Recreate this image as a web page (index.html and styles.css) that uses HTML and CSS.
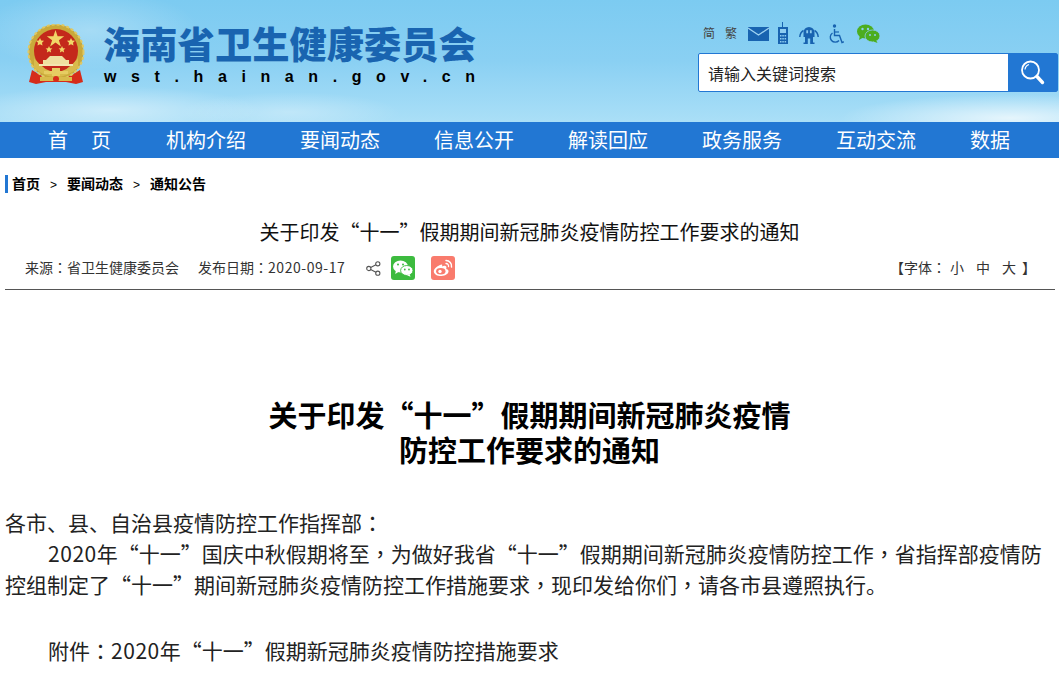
FILE: index.html
```html
<!DOCTYPE html>
<html lang="zh-CN">
<head>
<meta charset="utf-8">
<title>关于印发“十一”假期期间新冠肺炎疫情防控工作要求的通知</title>
<link rel="stylesheet" href="styles.css">
</head>
<body>
<header class="masthead">
  <div class="brand">
    <svg class="emblem" width="60" height="62" viewBox="0 0 60 62">
      <path d="M6 46 L3 58 L10 60 L20 58 L40 58 L50 60 L57 58 L54 46 L44 52 L16 52Z" fill="#d62c1a"/>
      <circle cx="30" cy="28" r="27.5" fill="#c9a93a"/>
      <circle cx="30" cy="28" r="27.5" fill="none" stroke="#e0c863" stroke-width="2" stroke-dasharray="3 2"/>
      <circle cx="30" cy="27" r="22" fill="#c4281b"/>
      <path d="M8 34 Q30 62 52 34 L52 44 Q30 62 8 44Z" fill="#d8bb4c"/>
      <path d="M29.500 6 L31.600 12.300 L38.200 12.300 L32.900 16.200 L34.900 22.500 L29.500 18.600 L24.100 22.500 L26.100 16.200 L20.800 12.300 L27.400 12.300Z" fill="#f1d768"/>
      <path d="M14 14l1.200 2.500 2.800.3-2 1.900.5 2.800-2.500-1.300-2.500 1.300.5-2.800-2-1.900 2.800-.3z" fill="#f1d768"/>
      <path d="M45 14l1.200 2.500 2.800.3-2 1.900.5 2.800-2.500-1.300-2.500 1.300.5-2.800-2-1.900 2.800-.3z" fill="#f1d768"/>
      <path d="M23 22l1 2.200 2.400.3-1.800 1.600.5 2.400-2.100-1.200-2.100 1.200.5-2.400-1.800-1.600 2.400-.3z" fill="#f1d768"/>
      <path d="M36 22l1 2.200 2.400.3-1.800 1.600.5 2.400-2.100-1.200-2.100 1.200.5-2.400-1.800-1.600 2.400-.3z" fill="#f1d768"/>
      <path d="M20 36 L24 32 L36 32 L40 36 L43 36 L43 40 L17 40 L17 36Z" fill="#efe0a0"/>
      <path d="M13 40h34v2H13z" fill="#f3e6b0"/>
      <path d="M18 47h24v3H18z M26 44h8v8h-8z" fill="#e6cd62"/>
      <path d="M14 53h32v4H14z" fill="#d8bb4c"/>
      <circle cx="30" cy="55" r="3" fill="#d62c1a"/>
    </svg>
    <div class="brand-text">
      <div class="brand-name">海南省卫生健康委员会</div>
      <div class="brand-url">wst.hainan.gov.cn</div>
    </div>
  </div>
  <div class="tools">
    <div class="tool-row">
      <span class="lang">简</span>
      <span class="lang lang-second">繁</span>
      <svg class="tool tool-mail" width="21" height="14" viewBox="0 0 21 14"><path d="M0 0h21v14H0z" fill="#1863b0"/><path d="M0 1l10.500 7L21 1" fill="none" stroke="#9fd3f2" stroke-width="1.300"/></svg>
      <svg class="tool tool-phone" width="10" height="22" viewBox="0 0 10 22"><path d="M4 0h1v6H4z" fill="#1863b0"/><path d="M0 5h10v17H0z" fill="#1863b0"/><path d="M2 7h6v4H2z" fill="#8fcdf0"/><path d="M2 13h1.500v1.500H2zM4.300 13h1.500v1.500H4.300zM6.600 13h1.500v1.500H6.600zM2 16h1.500v1.500H2zM4.300 16h1.500v1.500H4.300zM6.600 16h1.500v1.500H6.600zM2 19h1.500v1.500H2zM4.300 19h1.500v1.500H4.300zM6.600 19h1.500v1.500H6.600z" fill="#8fcdf0"/></svg>
      <svg class="tool tool-robot" width="20" height="18" viewBox="0 0 20 18"><path d="M4.500 6.500a5.500 5.500 0 0 1 11 0V11H14V18H11.200V12.500H8.800V18H6V11H4.500Z" fill="#1863b0"/><path d="M7.300 4.200h1.800v3H7.300zM10.900 4.200h1.800v3H10.900z" fill="#8fcdf0"/><path d="M4.500 4.500C1.500 6 1 8.500 .8 11M15.500 4.500C18.500 6 19 8.500 19.200 11" stroke="#1863b0" stroke-width="1.500" fill="none"/><path d="M4.500 17.300H8M12 17.300h3.500" stroke="#1863b0" stroke-width="1.400"/></svg>
      <svg class="tool tool-access" width="15" height="20" viewBox="0 0 15 20"><circle cx="5.500" cy="2" r="1.700" fill="#1863b0"/><path d="M5.500 5V11.500H10.500L13 18.500L15 17.800" fill="none" stroke="#1863b0" stroke-width="1.400"/><path d="M5.500 8H10" stroke="#1863b0" stroke-width="1.200"/><path d="M3.500 9A5 5 0 1 0 10 16.500" fill="none" stroke="#1863b0" stroke-width="1.400"/></svg>
      <svg class="tool tool-wechat" width="23" height="19" viewBox="0 0 23 19"><ellipse cx="8.500" cy="7.500" rx="8.500" ry="7" fill="#4cad1f"/><path d="M3 11l-1 5 5-3z" fill="#4cad1f"/><ellipse cx="15.500" cy="12" rx="7.500" ry="6" fill="#4cad1f" stroke="#8ccdf0" stroke-width=".8"/><path d="M19 16l1.500 3-4-1.500z" fill="#4cad1f"/><circle cx="5.500" cy="5" r="1.200" fill="#8fcdf0"/><circle cx="11" cy="5" r="1.200" fill="#8fcdf0"/><circle cx="13" cy="11" r="1" fill="#8fcdf0"/><circle cx="18" cy="11" r="1" fill="#8fcdf0"/></svg>
    </div>
    <form class="search">
      <div class="search-input">请输入关键词搜索</div>
      <div class="search-btn">
        <svg width="26" height="26" viewBox="0 0 26 26"><circle cx="10.500" cy="10" r="8.500" fill="none" stroke="#fff" stroke-width="1.800"/><path d="M5 9.500a6 6 0 0 1 4-5" fill="none" stroke="#fff" stroke-width="1.200"/><path d="M17 16.500l5.500 6" stroke="#fff" stroke-width="3.400" stroke-linecap="round"/></svg>
      </div>
    </form>
  </div>
</header>
<nav class="nav">
  <a class="nav-item nav-home">首&nbsp;&nbsp;&nbsp;&nbsp;页</a>
  <a class="nav-item">机构介绍</a>
  <a class="nav-item">要闻动态</a>
  <a class="nav-item">信息公开</a>
  <a class="nav-item">解读回应</a>
  <a class="nav-item">政务服务</a>
  <a class="nav-item">互动交流</a>
  <a class="nav-item">数据</a>
</nav>
<div class="crumb">
  <a>首页</a><span class="sep">&gt;</span><a>要闻动态</a><span class="sep">&gt;</span><a>通知公告</a>
</div>
<h2 class="doc-title">关于印发“十一”假期期间新冠肺炎疫情防控工作要求的通知</h2>
<div class="meta">
  <div class="meta-left">
    <span class="source">来源<span class="mid" lang="zh-TW">：</span>省卫生健康委员会</span>
    <span class="date">发布日期<span class="mid" lang="zh-TW">：</span><span class="num">2020-09-17</span></span>
    <svg class="share" width="15" height="15" viewBox="0 0 15 15"><circle cx="11.800" cy="2.800" r="2.100" fill="none" stroke="#555" stroke-width="1.100"/><circle cx="11.800" cy="12.200" r="2.100" fill="none" stroke="#555" stroke-width="1.100"/><circle cx="2.800" cy="7.500" r="2.100" fill="none" stroke="#555" stroke-width="1.100"/><path d="M4.700 6.500L9.900 3.800M4.700 8.500L9.900 11.200" stroke="#555" stroke-width="1.100"/></svg>
    <span class="badge badge-wechat">
      <svg width="20" height="17" viewBox="0 0 20 17"><ellipse cx="7.500" cy="6.500" rx="7.500" ry="6" fill="#fff"/><path d="M3 10l-.8 4 4-2.500z" fill="#fff"/><ellipse cx="13.800" cy="10.500" rx="6.200" ry="5" fill="#fff" stroke="#3dbb3f" stroke-width=".9"/><path d="M16.500 14l1 2.800-3.500-1.600z" fill="#fff"/><circle cx="5" cy="4.500" r="1" fill="#3dbb3f"/><circle cx="10" cy="4.500" r="1" fill="#3dbb3f"/><circle cx="11.800" cy="9.500" r=".9" fill="#3dbb3f"/><circle cx="16" cy="9.500" r=".9" fill="#3dbb3f"/></svg>
    </span>
    <span class="badge badge-weibo">
      <svg width="20" height="18" viewBox="0 0 20 18"><path d="M8.500 5.500C4.500 6.500 0.500 10 0.800 12.800C1.200 15.800 5 17.200 8.500 17C12.500 16.800 15.800 14.500 15.500 12C15.300 10.500 13.800 10.300 13.200 10C13.800 8.500 13.500 7 12 6.800C11 6.600 9.800 7 9 7.500C9.300 6.200 9.500 5.300 8.500 5.500Z" fill="#fff"/><ellipse cx="7.800" cy="12.300" rx="4.700" ry="3.300" fill="#f97b6d"/><circle cx="7" cy="12.500" r="1.700" fill="#fff"/><path d="M13 1.500A5.500 5.500 0 0 1 18.500 8" fill="none" stroke="#fff" stroke-width="1.500" stroke-linecap="round"/><path d="M13 4.500A2.500 2.500 0 0 1 15.500 7.500" fill="none" stroke="#fff" stroke-width="1.300" stroke-linecap="round"/></svg>
    </span>
  </div>
  <div class="font-size">【字体<span class="mid" lang="zh-TW">：</span><span class="fs fs-first">小</span><span class="fs">中</span><span class="fs">大</span>】</div>
</div>
<article class="article">
  <h1 class="headline">关于印发“十一”假期期间新冠肺炎疫情<br>防控工作要求的通知</h1>
  <p class="para para-first">各市、县、自治县疫情防控工作指挥部<span class="mid" lang="zh-TW">：</span></p>
  <p class="para para-indent"><span class="num">2020</span>年“十一”国庆中秋假期将至<span class="mid" lang="zh-TW">，</span>为做好我省“十一”假期期间新冠肺炎疫情防控工作<span class="mid" lang="zh-TW">，</span>省指挥部疫情防控组制定了“十一”期间新冠肺炎疫情防控工作措施要求<span class="mid" lang="zh-TW">，</span>现印发给你们<span class="mid" lang="zh-TW">，</span>请各市县遵照执行。</p>
  <p class="para para-indent para-attach">附件<span class="mid" lang="zh-TW">：</span><span class="num">2020</span>年“十一”假期新冠肺炎疫情防控措施要求</p>
</article>
</body>
</html>
```
FILE: styles.css
```css
* { box-sizing: border-box; }
html, body { margin: 0; padding: 0; }
body {
  background: #fff;
  color: #000;
  font-family: "Noto Sans CJK SC", "Liberation Sans", sans-serif;
  overflow-x: hidden;
}
.mid { font-family: "Noto Sans CJK TC", "Noto Sans CJK SC", sans-serif; }
.num { letter-spacing: .55px; }
.masthead {
  height: 122px;
  display: flex;
  justify-content: space-between;
  background:
    radial-gradient(ellipse 110px 40px at 90px 30px, rgba(255,255,255,.28), transparent),
    radial-gradient(ellipse 150px 24px at 110px 110px, rgba(255,255,255,.45), transparent),
    radial-gradient(ellipse 110px 20px at 290px 112px, rgba(255,255,255,.3), transparent),
    radial-gradient(ellipse 170px 24px at 1010px 118px, rgba(255,255,255,.7), transparent),
    linear-gradient(180deg, #7ccbf1 0%, #8ad0f3 50%, #aadff7 100%);
}
.brand { display: flex; padding: 23px 0 0 26px; }
.emblem { margin-top: 1px; }
.brand-text { margin-left: 17px; }
.brand-name {
  font-size: 37.300px;
  line-height: 42px;
  font-weight: 900;
  color: #1964b0;
  white-space: nowrap;
  margin-top: -1px;
}
.brand-url {
  font-family: "Liberation Sans", sans-serif;
  font-size: 16px;
  line-height: 20px;
  font-weight: 700;
  letter-spacing: 14.600px;
  margin-top: 3px;
  margin-left: 1px;
  white-space: nowrap;
}
.tools { width: 361px; padding-top: 22px; }
.tool-row { height: 31px; display: flex; align-items: flex-start; padding-left: 5px; }
.lang { font-size: 12px; line-height: 22px; color: #444; }
.lang-second { margin-left: 10px; }
.tool { flex: none; }
.tool-mail { margin: 5px 0 0 11px; }
.tool-phone { margin: 0 0 0 9px; }
.tool-robot { margin: 4px 0 0 11px; }
.tool-access { margin: 2px 0 0 10px; }
.tool-wechat { margin: 2px 0 0 13px; }
.search {
  display: flex;
  height: 39px;
  width: 360px;
  border: 1px solid #2277d3;
  border-radius: 2px;
  background: #fff;
  margin: 0;
}
.search-input {
  flex: 1;
  font-size: 16px;
  line-height: 38px;
  padding-left: 9px;
  color: #222;
}
.search-btn {
  width: 49px;
  background: #2277d3;
  display: flex;
  align-items: center;
  justify-content: center;
}
.nav {
  height: 36px;
  background: #2277d3;
  display: flex;
  padding-left: 48px;
  gap: 54px;
}
.nav-item { color: #fff; font-size: 20px; line-height: 36px; white-space: nowrap; }
.nav-home { word-spacing: 1.250px; margin-right: 1px; }
.crumb {
  margin: 17px 0 0 5px;
  height: 18px;
  border-left: 3px solid #2277d3;
  padding-left: 4px;
  font-size: 14px;
  line-height: 17px;
  font-weight: 700;
  white-space: nowrap;
}
.sep { font-family: "Liberation Sans", sans-serif; font-weight: 400; margin: 0 10px; font-size: 12px; }
.doc-title {
  margin: 24px 0 0;
  font-size: 20px;
  line-height: 30px;
  font-weight: 400;
  text-align: center;
  color: #111;
}
.meta {
  margin: 8px 4px 0 5px;
  height: 35px;
  display: flex;
  justify-content: space-between;
  border-bottom: 1px solid #555;
  font-size: 14px;
  color: #333;
}
.meta-left { display: flex; align-items: flex-start; padding-left: 20px; }
.source, .date { line-height: 24px; white-space: nowrap; }
.date { margin-left: 19px; }
.share { margin: 6px 0 0 21px; }
.badge {
  width: 24px;
  height: 24px;
  margin-top: 1px;
  border-radius: 3px;
  display: flex;
  align-items: center;
  justify-content: center;
}
.badge-wechat { background: #3dbb3f; margin-left: 10px; }
.badge-weibo { background: #f97b6d; margin-left: 16px; }
.font-size { line-height: 24px; padding-right: 19px; white-space: nowrap; }
.fs { margin: 0 6px; color: #333; }
.fs-first { margin-left: 4px; }
.article { padding: 0 5px; }
.headline {
  margin: 0;
  padding-top: 107px;
  font-size: 29px;
  line-height: 35px;
  font-weight: 700;
  text-align: center;
}
.para {
  margin: 0;
  font-size: 21px;
  line-height: 31px;
  color: #222;
}
.para-first { margin-top: 40px; }
.para-indent { text-indent: 43px; }
.para-attach { margin-top: 35px; }
```
